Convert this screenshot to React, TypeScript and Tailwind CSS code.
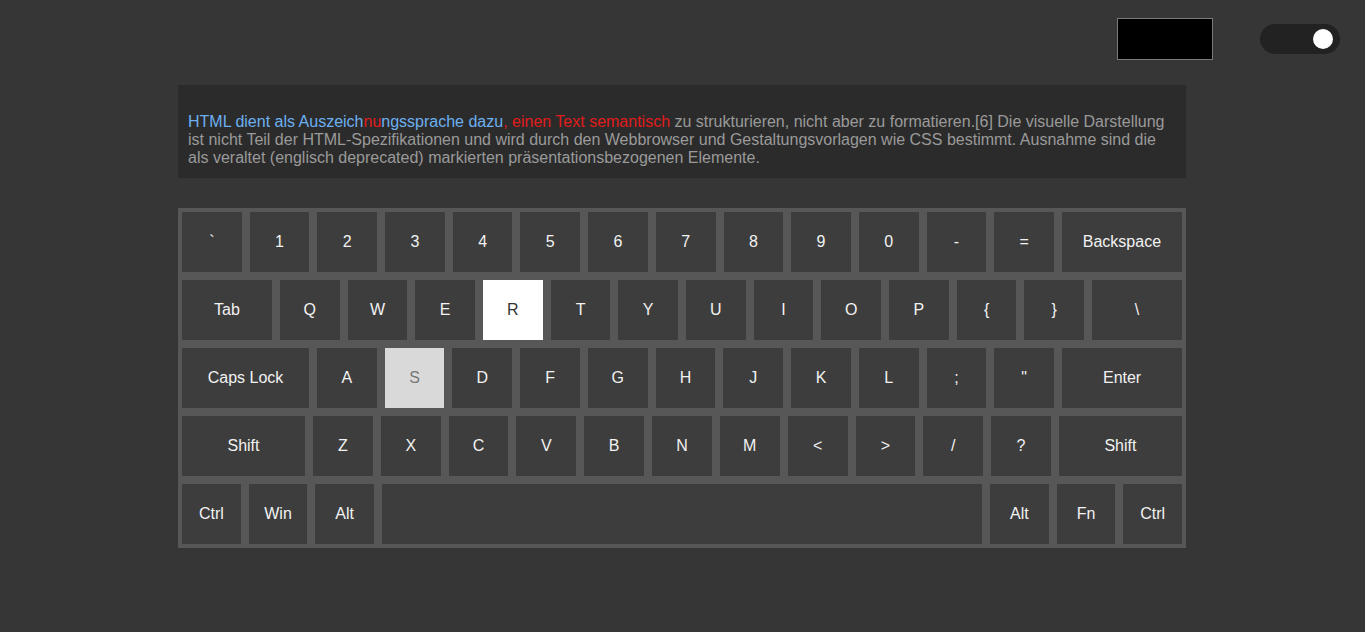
const rows: { label: string; w?: string }[][] = [
  [
    { label: "`" }, { label: "1" }, { label: "2" }, { label: "3" }, { label: "4" },
    { label: "5" }, { label: "6" }, { label: "7" }, { label: "8" }, { label: "9" },
    { label: "0" }, { label: "-" }, { label: "=" },
    { label: "Backspace", w: "w-[120px]" },
  ],
  [
    { label: "Tab", w: "w-[90px]" },
    { label: "Q" }, { label: "W" }, { label: "E" }, { label: "R" }, { label: "T" },
    { label: "Y" }, { label: "U" }, { label: "I" }, { label: "O" }, { label: "P" },
    { label: "{" }, { label: "}" },
    { label: "\\", w: "w-[90px]" },
  ],
  [
    { label: "Caps Lock", w: "w-[127px]" },
    { label: "A" }, { label: "S" }, { label: "D" }, { label: "F" }, { label: "G" },
    { label: "H" }, { label: "J" }, { label: "K" }, { label: "L" }, { label: ";" },
    { label: '"' },
    { label: "Enter", w: "w-[120px]" },
  ],
  [
    { label: "Shift", w: "w-[123px]" },
    { label: "Z" }, { label: "X" }, { label: "C" }, { label: "V" }, { label: "B" },
    { label: "N" }, { label: "M" }, { label: "<" }, { label: ">" }, { label: "/" },
    { label: "?" },
    { label: "Shift", w: "w-[123px]" },
  ],
  [
    { label: "Ctrl" }, { label: "Win" }, { label: "Alt" },
    { label: "", w: "w-[600px]" },
    { label: "Alt" }, { label: "Fn" }, { label: "Ctrl" },
  ],
];

// R is the key to press next, S was the last wrong one
const activeKey = "R";
const missedKey = "S";

function Key({ label, w }: { label: string; w?: string }) {
  let tone = "bg-[#3d3d3d] text-[#f2f2f2]";
  if (label === activeKey) tone = "bg-white text-[#333]";
  if (label === missedKey) tone = "bg-[#d9d9d9] text-[#777]";

  return (
    <div
      className={`m-1 flex h-[60px] items-center justify-center text-base ${w ?? "flex-1"} ${tone}`}
    >
      {label}
    </div>
  );
}

export default function App() {
  return (
    <div className="min-h-[632px] bg-[#363636] font-['Liberation_Sans',Arial,sans-serif]">
      <div className="flex h-[85px] items-start justify-end pr-[25px] pt-[18px]">
        <div className="h-[42px] w-[96px] border border-[#7a7a7a] bg-black" />
        <div className="ml-[47px] mt-[6px] flex h-[30px] w-[80px] items-center justify-end rounded-full bg-[#222] pr-[7px]">
          <div className="h-[20px] w-[20px] rounded-full bg-white" />
        </div>
      </div>

      <div className="ml-[178px] w-[1008px]">
        <p className="bg-[#2b2b2b] px-[10px] pb-[11px] pt-[28px] text-base leading-[18px] text-[#9a9a9a]">
          <span className="text-[#6cb0f0]">HTML dient als Auszeich</span>
          <span className="text-[#e01b1b]">nu</span>
          <span className="text-[#6cb0f0]">ngssprache dazu</span>
          <span className="text-[#e01b1b]">, einen Text semantisch</span> zu strukturieren,
          nicht aber zu formatieren.[6] Die visuelle Darstellung ist nicht Teil der
          HTML-Spezifikationen und wird durch den Webbrowser und Gestaltungsvorlagen wie CSS
          bestimmt. Ausnahme sind die als veraltet (englisch deprecated) markierten
          präsentationsbezogenen Elemente.
        </p>

        <div className="mt-[30px] bg-[#575757]">
          {rows.map((row, i) => (
            <div key={i} className="flex">
              {row.map((k, j) => (
                <Key key={j} label={k.label} w={k.w} />
              ))}
            </div>
          ))}
        </div>
      </div>
    </div>
  );
}
